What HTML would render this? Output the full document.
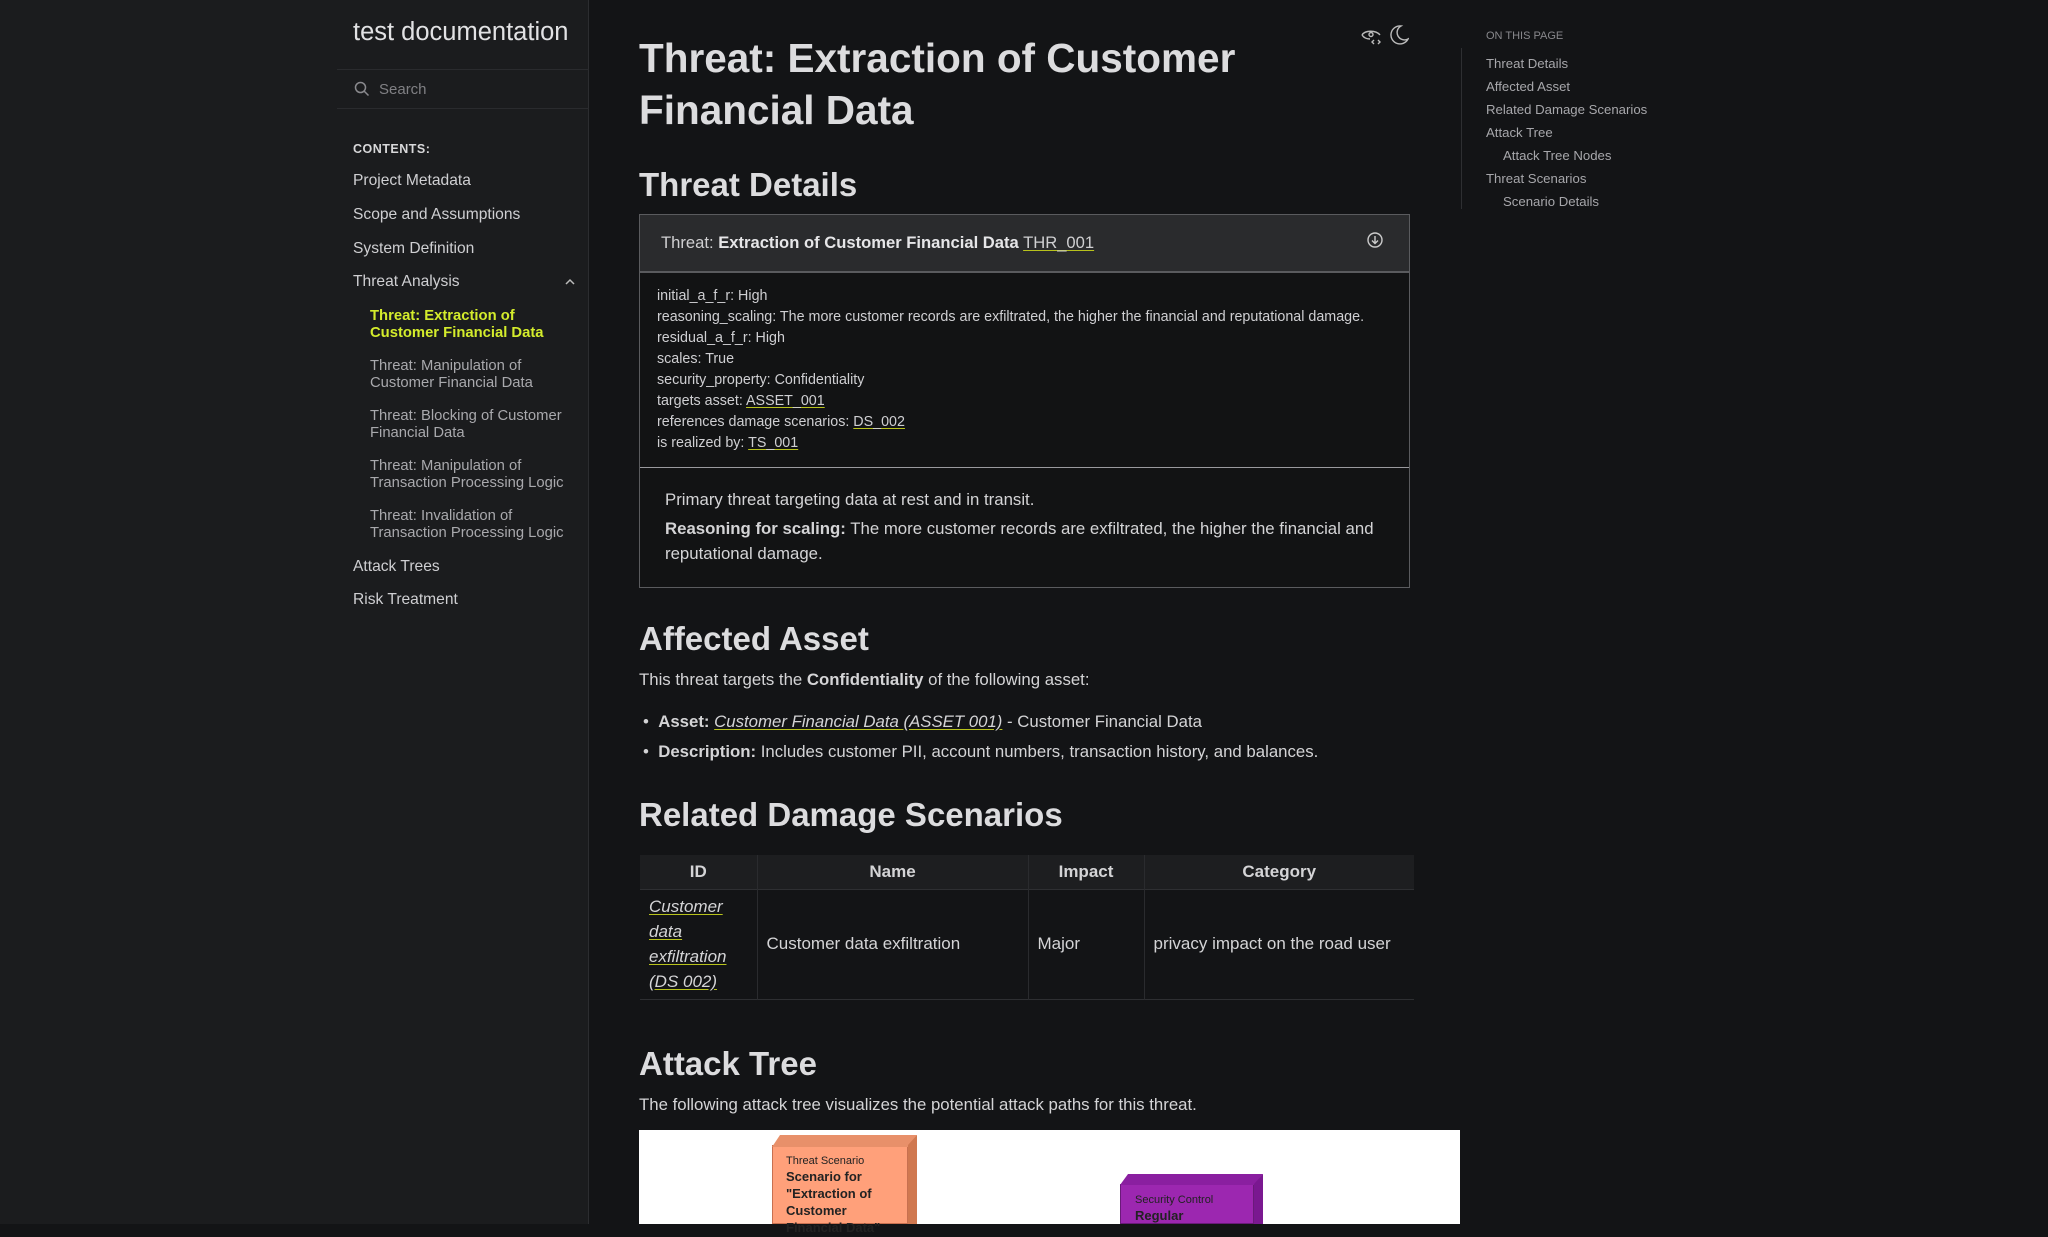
<!DOCTYPE html>
<html><head><meta charset="utf-8"><style>
*{margin:0;padding:0;box-sizing:border-box}
body{width:2048px;height:1224px;overflow:hidden;background:#131416;font-family:"Liberation Sans",sans-serif;color:#d4d4d6;position:relative}
.abs{position:absolute;white-space:nowrap}
#side{position:absolute;left:0;top:0;width:589px;height:1224px;background:#1b1c1e;border-right:1px solid #2c2d30}
.nav{position:absolute;left:353px;font-size:15.6px;color:#cfcfd2}
.sub{position:absolute;left:370px;font-size:14.8px;line-height:17px;color:#a9a9ad}
a{color:inherit;text-decoration:underline;text-decoration-color:#b8c21c;text-underline-offset:2px}
h1{position:absolute;left:639px;top:32px;font-size:40.5px;line-height:52px;font-weight:bold;color:#dcdcde}
h2{position:absolute;left:639px;font-size:33px;font-weight:bold;color:#dcdcde;white-space:nowrap}
.row{position:absolute;left:657px;font-size:14.3px;color:#cfcfd2;white-space:nowrap}
.p{position:absolute;left:639px;font-size:16.8px;color:#d4d4d6;white-space:nowrap}
.toc{position:absolute;left:1486px;font-size:13.2px;color:#a7a7ab;white-space:nowrap}
td,th{border-right:1px solid #2a2b2e;font-size:17px;padding:0 9px}
</style></head><body>
<div id="side"></div>
<div class="abs" style="left:353px;top:18px;font-size:25.5px;color:#e2e2e4">test documentation</div>
<div style="position:absolute;left:337px;top:69px;width:252px;height:40px;border-top:1px solid #2a2b2e;border-bottom:1px solid #2a2b2e"></div>
<svg class="abs" style="left:354px;top:81px" width="16" height="16" viewBox="0 0 16 16"><circle cx="6.5" cy="6.5" r="5" fill="none" stroke="#8a8a8e" stroke-width="1.5"/><path d="M10 10l4.5 4.5" stroke="#8a8a8e" stroke-width="1.5"/></svg>
<div class="abs" style="left:379px;top:81px;font-size:15px;color:#808084">Search</div>
<div class="abs" style="left:353px;top:142px;font-size:12.5px;font-weight:bold;color:#d8d8da;letter-spacing:.5px">CONTENTS:</div>
<div class="nav" style="top:172px">Project Metadata</div>
<div class="nav" style="top:206px">Scope and Assumptions</div>
<div class="nav" style="top:240px">System Definition</div>
<div class="nav" style="top:273px">Threat Analysis</div>
<svg class="abs" style="left:564px;top:277px" width="12" height="10"><path d="M2 7l4-4 4 4" fill="none" stroke="#bbb" stroke-width="1.5"/></svg>
<div class="sub" style="top:308px;color:#d4ec2c;font-weight:bold">Threat: Extraction of<br>Customer Financial Data</div>
<div class="sub" style="top:358px">Threat: Manipulation of<br>Customer Financial Data</div>
<div class="sub" style="top:408px">Threat: Blocking of Customer<br>Financial Data</div>
<div class="sub" style="top:458px">Threat: Manipulation of<br>Transaction Processing Logic</div>
<div class="sub" style="top:508px">Threat: Invalidation of<br>Transaction Processing Logic</div>
<div class="nav" style="top:558px">Attack Trees</div>
<div class="nav" style="top:591px">Risk Treatment</div>

<h1>Threat: Extraction of Customer<br>Financial Data</h1>
<svg class="abs" style="left:1360px;top:25px" width="22" height="22" viewBox="0 0 22 22" fill="none" stroke="#bbb" stroke-width="1.4"><path d="M2 10c3-5 14-5 18 0"/><path d="M2 10c2 3 5 4 8 4"/><circle cx="11" cy="9.5" r="2"/><path d="M14 15l-2 2 2 2M18 15l2 2-2 2"/></svg>
<svg class="abs" style="left:1389px;top:24px" width="20" height="22" viewBox="0 0 20 22" fill="none" stroke="#bbb" stroke-width="1.4"><path d="M12 2a9 9 0 1 0 7 13A7 7 0 0 1 12 2z"/></svg>

<h2 style="top:166px">Threat Details</h2>
<div style="position:absolute;left:639px;top:214px;width:771px;height:374px;border:1px solid #5a5b5e;background:#121314">
<div style="height:58px;background:#2a2b2d;border-bottom:2px solid #5a5b5e"></div>
<div style="position:absolute;left:0;right:0;top:252px;border-top:1px solid #9a9a9e"></div>
</div>
<div class="abs" style="left:661px;top:233px;font-size:16.6px;color:#d0d0d2">Threat: <b style="color:#e6e6e8">Extraction of Customer Financial Data</b> <a>THR_001</a></div>
<svg class="abs" style="left:1366px;top:231px" width="18" height="18" viewBox="0 0 18 18" fill="none" stroke="#ccc" stroke-width="1.4"><circle cx="9" cy="9" r="7"/><path d="M9 5v7M6 9.5l3 3 3-3"/></svg>
<div class="row" style="top:288px">initial_a_f_r: High</div>
<div class="row" style="top:309px">reasoning_scaling: The more customer records are exfiltrated, the higher the financial and reputational damage.</div>
<div class="row" style="top:330px">residual_a_f_r: High</div>
<div class="row" style="top:351px">scales: True</div>
<div class="row" style="top:372px">security_property: Confidentiality</div>
<div class="row" style="top:393px">targets asset: <a>ASSET_001</a></div>
<div class="row" style="top:414px">references damage scenarios: <a>DS_002</a></div>
<div class="row" style="top:435px">is realized by: <a>TS_001</a></div>
<div class="abs" style="left:665px;top:487px;font-size:16.8px;line-height:25px">Primary threat targeting data at rest and in transit.</div>
<div class="abs" style="left:665px;top:516px;font-size:16.8px;line-height:25px;white-space:normal;width:720px"><b>Reasoning for scaling:</b> The more customer records are exfiltrated, the higher the financial and reputational damage.</div>

<h2 style="top:620px">Affected Asset</h2>
<div class="p" style="top:670px">This threat targets the <b>Confidentiality</b> of the following asset:</div>
<div class="p" style="top:712px;left:643px">•&nbsp;&nbsp;<b>Asset:</b> <a><i>Customer Financial Data (ASSET 001)</i></a> - Customer Financial Data</div>
<div class="p" style="top:742px;left:643px">•&nbsp;&nbsp;<b>Description:</b> Includes customer PII, account numbers, transaction history, and balances.</div>

<h2 style="top:796px">Related Damage Scenarios</h2>
<table style="position:absolute;left:640px;top:855px;width:774px;border-collapse:collapse;color:#d4d4d6">
<tr style="height:34px;background:#1d1e20;border-bottom:1px solid #2e2f32"><th style="width:117px">ID</th><th style="width:271px">Name</th><th style="width:116px">Impact</th><th style="border-right:none">Category</th></tr>
<tr style="height:110px;border-bottom:1px solid #2e2f32"><td style="line-height:25px;text-align:left"><a><i>Customer<br>data<br>exfiltration<br>(DS 002)</i></a></td><td>Customer data exfiltration</td><td>Major</td><td style="border-right:none">privacy impact on the road user</td></tr>
</table>

<h2 style="top:1045px">Attack Tree</h2>
<div class="p" style="top:1095px">The following attack tree visualizes the potential attack paths for this threat.</div>
<div style="position:absolute;left:639px;top:1130px;width:821px;height:94px;background:#fff"></div>
<div style="position:absolute;left:772px;top:1145px;width:136px;height:79px;background:#ffa07a;border:1px solid #c87050"></div>
<div style="position:absolute;left:772px;top:1135px;width:145px;height:12px;background:#e8906a;clip-path:polygon(8px 0,100% 0,136px 100%,0 100%)"></div>
<div style="position:absolute;left:908px;top:1135px;width:9px;height:89px;background:#d07850;clip-path:polygon(100% 0,100% 100%,0 100%,0 10px)"></div>
<div class="abs" style="left:786px;top:1154px;font-size:11px;color:#222;line-height:15px">Threat Scenario<br><b style="font-size:13px">Scenario for<br>"Extraction of<br>Customer<br>Financial Data"</b></div>
<div style="position:absolute;left:1120px;top:1184px;width:134px;height:40px;background:#9c27b0;border:1px solid #6a1a7a"></div>
<div style="position:absolute;left:1120px;top:1174px;width:143px;height:11px;background:#8a1fa0;clip-path:polygon(8px 0,100% 0,134px 100%,0 100%)"></div>
<div style="position:absolute;left:1254px;top:1174px;width:9px;height:50px;background:#7a1890;clip-path:polygon(100% 0,100% 100%,0 100%,0 10px)"></div>
<div class="abs" style="left:1135px;top:1193px;font-size:11px;color:#222;line-height:15px">Security Control<br><b style="font-size:13px">Regular</b></div>

<div style="position:absolute;left:1461px;top:48px;width:1px;height:161px;background:#2e2f32"></div>
<div class="toc" style="top:30px;font-size:11px;color:#88888c">ON THIS PAGE</div>
<div class="toc" style="top:56px">Threat Details</div>
<div class="toc" style="top:79px">Affected Asset</div>
<div class="toc" style="top:102px">Related Damage Scenarios</div>
<div class="toc" style="top:125px">Attack Tree</div>
<div class="toc" style="top:148px;left:1503px">Attack Tree Nodes</div>
<div class="toc" style="top:171px">Threat Scenarios</div>
<div class="toc" style="top:194px;left:1503px">Scenario Details</div>
</body></html>
